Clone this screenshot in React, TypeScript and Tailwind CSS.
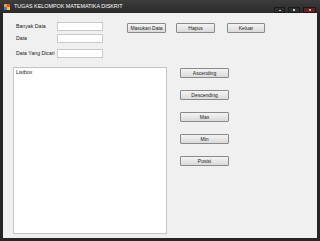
import React from 'react';

const font = { fontFamily: '"Liberation Sans", Arial, sans-serif' };

const WinButton: React.FC<{ label: string; className?: string }> = ({ label, className = '' }) => (
    <div
        className={`flex items-center justify-center h-[10px] rounded-[1px] border border-[#8a8a8a] bg-gradient-to-b from-[#f4f4f4] to-[#dadada] text-[5px] leading-none text-[#222] whitespace-nowrap ${className}`}
    >
        {label}
    </div>
);

const TextBox: React.FC = () => (
    <div className="w-[46px] h-[9px] bg-white border border-[#c9c9c9]" />
);

export default function App() {
    const sideButtons = ['Ascending', 'Descending', 'Max', 'Min', 'Posisi'];

    return (
        <div className="w-[320px] h-[241px] flex flex-col bg-[#262626] overflow-hidden text-[5.2px] leading-none" style={font}>
            {/* title bar */}
            <div className="h-[13px] flex items-start bg-gradient-to-b from-[#3c3c3c] to-[#2a2a2a]">
                <div className="ml-[4px] mt-[4px] w-[6px] h-[6px] grid grid-cols-2">
                    <div className="bg-[#f6a21a]" />
                    <div className="bg-[#e8542c]" />
                    <div className="bg-[#3d7fd6]" />
                    <div className="bg-[#f3c744]" />
                </div>
                <span className="ml-[4px] mt-[4px] text-[5.4px] leading-none text-white whitespace-nowrap">
                    TUGAS KELOMPOK MATEMATIKA DISKRIT
                </span>
                <div className="ml-auto mr-[4px] mt-[7px] flex gap-[3px]">
                    <div className="w-[11px] h-[6px] bg-[#2e2e2e] border border-[#1a1a1a] flex items-end justify-center">
                        <div className="w-[2px] h-[1px] mb-[1px] bg-[#bbb]" />
                    </div>
                    <div className="w-[12px] h-[6px] bg-[#2e2e2e] border border-[#1a1a1a] flex items-center justify-center">
                        <div className="w-[2px] h-[2px] bg-[#ccc]" />
                    </div>
                    <div className="w-[13px] h-[6px] bg-[#5a2424] border border-[#2a1010] flex items-center justify-center">
                        <div className="w-[2px] h-[2px] bg-[#d99]" />
                    </div>
                </div>
            </div>

            {/* client area */}
            <div className="mx-[3px] mb-[3px] flex-1 bg-[#f0f0f0] flex flex-col text-[#222]">
                <div className="flex pl-[13px] pt-[9px]">
                    <div className="flex flex-col">
                        <div className="flex items-center h-[9px]">
                            <div className="w-[41px] whitespace-nowrap">Banyak Data</div>
                            <TextBox />
                        </div>
                        <div className="flex items-center h-[9px] mt-[3px]">
                            <div className="w-[41px] whitespace-nowrap">Data</div>
                            <TextBox />
                        </div>
                        <div className="flex items-center h-[9px] mt-[6px]">
                            <div className="w-[41px] whitespace-nowrap">Data Yang Dicari</div>
                            <TextBox />
                        </div>
                    </div>
                    <div className="flex items-start mt-[1px] ml-[24px]">
                        <WinButton label="Masukan Data" className="w-[39px]" />
                        <WinButton label="Hapus" className="w-[39px] ml-[10px]" />
                        <WinButton label="Keluar" className="w-[38px] ml-[12px]" />
                    </div>
                </div>

                <div className="flex pl-[10px] mt-[9px]">
                    <div className="w-[154px] h-[167px] bg-white border border-[#c4c4c4] px-[2px] pt-[2px]">
                        <div>Listbox</div>
                    </div>
                    <div className="ml-[13px] pt-[1px] flex flex-col gap-[12px]">
                        {sideButtons.map(b => (
                            <WinButton key={b} label={b} className="w-[49px]" />
                        ))}
                    </div>
                </div>
            </div>
        </div>
    );
}
